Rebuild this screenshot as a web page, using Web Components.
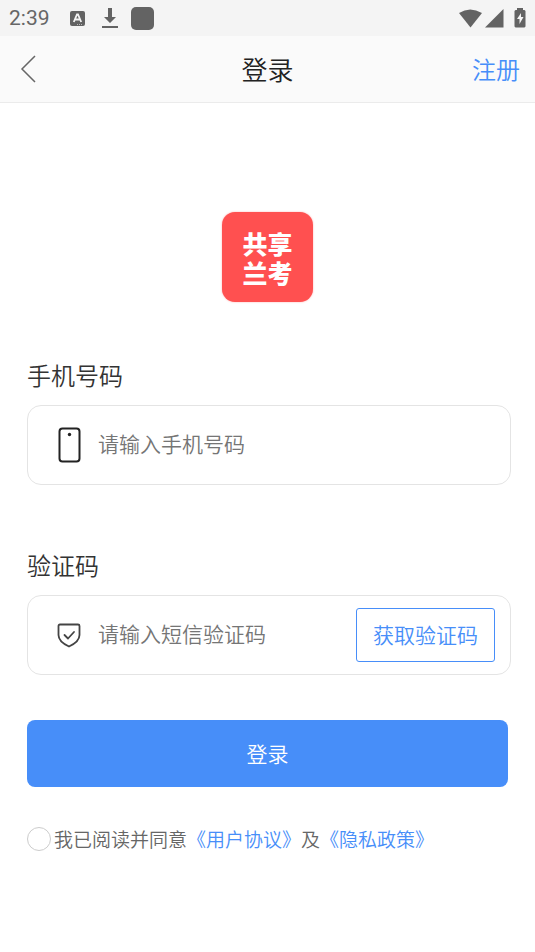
<!DOCTYPE html>
<html lang="zh-CN">
<head>
<meta charset="utf-8">
<meta name="viewport" content="width=device-width, initial-scale=1">
<title>登录</title>
<style>
body { margin: 0; background: #fff; color: #333; font-family: "Noto Sans CJK SC", sans-serif; font-weight: 350; }
</style>
</head>
<body>
<login-page></login-page>

<template id="status-bar">
<style>
:host { display: flex; align-items: center; height: 36px; padding: 0 9px; background: #f4f4f4; color: #666; }
time { flex: none; font: 21px/36px Roboto, sans-serif; }
.left { display: flex; flex: 1; align-items: center; gap: 20px; }
svg { display: block; }
.icons, .right { display: flex; align-items: center; }
.icons { gap: 17px; }
.app { margin-left: -4px; }
.right { gap: 3px; }
.battery { margin-left: 7px; }
</style>
<div class="left">
<time>2:39</time>
<div class="icons">
<svg width="15" height="17" viewBox="0 0 15 17"><rect y="1" width="15" height="15" rx="2" fill="#636363"/><path d="M3.800 12 7 4.500h1l3.200 7.500M5 9.500h5" fill="none" stroke="#f4f4f4" stroke-width="1.800"/><path d="M7 14.500h6" stroke="#bbb" stroke-dasharray="1 1"/></svg>
<svg width="16" height="22" viewBox="0 0 16 22" fill="#636363"><path d="M6 1h4v9h4l-6 6-6-6h4zM0 19h16v2H0z"/></svg>
<svg class="app" width="23" height="23" viewBox="0 0 23 23"><rect width="23" height="23" rx="5" fill="#636363"/></svg>
</div>
</div>
<div class="right">
<svg width="23" height="19" viewBox="0 0 23 19"><path d="M0 4Q11-3 23 4L11.500 18.500z" fill="#636363"/></svg>
<svg width="19" height="19" viewBox="0 0 19 19"><path d="M18.500 0v18.500H0z" fill="#636363"/></svg>
<svg class="battery" width="12" height="20" viewBox="0 0 12 20"><path d="M3 0h6v2h1.500l1 1v15.500l-1 1h-9l-1-1V3l1-1H3z" fill="#636363"/><path d="M7 5 3 11h2.500v5l4-7H7z" fill="#f4f4f4"/></svg>
</div>
</template>

<template id="nav-bar">
<style>
:host { display: grid; grid-template-columns: 1fr auto 1fr; align-items: center; height: 66px; padding: 0 15px; background: #fafafa; border-bottom: 1px solid #ebebeb; }
button { justify-self: start; padding: 0 5px; border: 0; background: none; }
svg { display: block; }
h1 { margin: 0; font-size: 26px; line-height: 40px; font-weight: inherit; color: #222; }
a { justify-self: end; color: #478ef9; text-decoration: none; font-size: 24px; line-height: 36px; }
</style>
<button type="button" aria-label="返回"><svg width="17" height="28" viewBox="0 0 17 28"><path d="M15 1 2 14l13 13" fill="none" stroke="#666" stroke-width="1.500"/></svg></button>
<h1><slot></slot></h1>
<a href="#register">注册</a>
</template>

<template id="brand-logo">
<style>
:host { display: grid; place-content: center; box-sizing: border-box; width: 91px; height: 90px; padding-top: 5px; border-radius: 13px; background: #ff5050; box-shadow: 0 0 2px #ffaaaa; color: #fff; font: 900 25px/29px "Liberation Sans", "Noto Sans CJK SC", sans-serif; }
</style>
<div>共享<br>兰考</div>
</template>

<template id="form-field">
<style>
:host { display: block; }
label { display: block; font-size: 24px; line-height: 36px; padding-bottom: 12px; }
.box { display: flex; align-items: center; box-sizing: border-box; height: 80px; padding: 0 15px 0 29px; border: 1px solid #e4e4e4; border-radius: 14px; }
.icon { display: flex; width: 24px; justify-content: center; margin-right: 17px; }
input { flex: 1; min-width: 0; padding: 0 0 5px; border: 0; outline: 0; background: none; font: inherit; font-size: 21px; line-height: 32px; color: #333; }
input::placeholder { color: #757575; opacity: 1; }
</style>
<label for="field"></label>
<div class="box"><span class="icon"><slot name="icon"></slot></span><input id="field"><slot name="action"></slot></div>
</template>

<template id="action-button">
<style>
:host { display: block; }
button { display: block; width: 100%; box-sizing: border-box; font: inherit; font-size: 21px; line-height: 32px; cursor: pointer; }
:host([kind="outline"]) button { padding: 9px 16px 11px; border: 1px solid #478ef9; border-radius: 3px; background: #fff; color: #478ef9; }
:host([kind="solid"]) button { padding: 17px 16px 18px; border: 0; border-radius: 8px; background: #478ef9; color: #fff; }
</style>
<button type="button"><slot></slot></button>
</template>

<template id="agreement-row">
<style>
:host { display: flex; align-items: center; gap: 3px; color: #666; font-size: 19px; line-height: 28px; }
input { appearance: none; flex: none; width: 24px; height: 24px; margin: 0; border: 1px solid #ccc; border-radius: 50%; background: #fff; }
input:checked { background: #478ef9; border-color: #478ef9; }
a { color: #478ef9; text-decoration: none; }
</style>
<input type="checkbox" id="agree">
<div><label for="agree">我已阅读并同意</label><a href="#terms">《用户协议》</a>及<a href="#privacy">《隐私政策》</a></div>
</template>

<template id="login-page">
<style>
:host { display: block; }
main { padding: 109px 27px 40px; }
brand-logo { margin: 0 auto 55px; }
form-field { margin: 0 -3px 62px 0; }
form-field.last { margin-bottom: 45px; }
agreement-row { margin-top: 38px; }
svg { display: block; }
</style>
<status-bar></status-bar>
<nav-bar>登录</nav-bar>
<main>
<brand-logo></brand-logo>
<form-field label="手机号码" hint="请输入手机号码" type="tel">
<svg slot="icon" width="23" height="36" viewBox="0 0 23 36"><rect x="1.500" y="1.500" width="20" height="33" rx="3" fill="none" stroke="#222" stroke-width="2"/><circle cx="11.500" cy="7.500" r="1.700" fill="#222"/></svg>
</form-field>
<form-field class="last" label="验证码" hint="请输入短信验证码" type="text">
<svg slot="icon" width="24" height="25" viewBox="0 0 24 25" fill="none" stroke="#444" stroke-width="1.800" stroke-linejoin="round" stroke-linecap="round"><path d="M3 1.500h18q1.500 0 1.500 1.500v9c0 5-4 8.500-10.500 11.500C5.500 20.500 1.500 17 1.500 12V3q0-1.500 1.500-1.500z"/><path d="m7.500 12 3.500 3.500L17 9"/></svg>
<action-button slot="action" kind="outline">获取验证码</action-button>
</form-field>
<action-button kind="solid">登录</action-button>
<agreement-row></agreement-row>
</main>
</template>

<script>
class TemplateElement extends HTMLElement {
  constructor() {
    super();
    const template = document.getElementById(this.localName);
    this.attachShadow({ mode: "open" }).append(template.content.cloneNode(true));
  }
}
class FormField extends TemplateElement {
  connectedCallback() {
    this.shadowRoot.querySelector("label").textContent = this.getAttribute("label");
    const input = this.shadowRoot.querySelector("input");
    input.type = this.getAttribute("type") || "text";
    input.placeholder = this.getAttribute("hint") || "";
  }
}
customElements.define("status-bar", class extends TemplateElement {});
customElements.define("nav-bar", class extends TemplateElement {});
customElements.define("brand-logo", class extends TemplateElement {});
customElements.define("form-field", FormField);
customElements.define("action-button", class extends TemplateElement {});
customElements.define("agreement-row", class extends TemplateElement {});
customElements.define("login-page", class extends TemplateElement {});
</script>
</body>
</html>
